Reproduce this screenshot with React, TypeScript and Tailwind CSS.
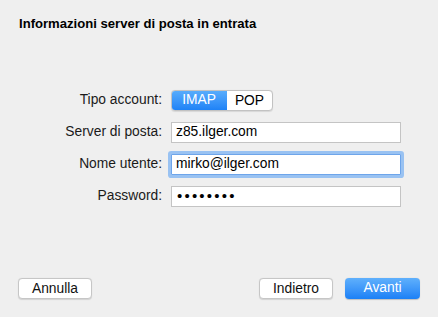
import { useState } from "react";

const FONT = "font-['Helvetica_Neue','Liberation_Sans',Arial,sans-serif]";

function FieldRow({ label, children }: { label: string; children: React.ReactNode }) {
  return (
    <div className="flex h-[21px] items-center">
      <div className="w-[163px] pr-[1px] text-right text-[13.8px] text-[#1a1a1a]">{label}</div>
      <div className="ml-[8px] flex h-full w-[230px] items-center">{children}</div>
    </div>
  );
}

function TextField({ value, focused, secret }: { value: string; focused?: boolean; secret?: boolean }) {
  const base = focused
    ? "flex h-full w-full items-center rounded-[1px] border border-[#6ea5ea] bg-white pl-[4px] text-black shadow-[0_0_0_3px_#99c2f2]"
    : "flex h-full w-full items-center border border-[#c4c4c4] bg-white pl-[4px] text-black";
  return (
    <div className={base}>
      {secret ? (
        <span className="pl-[1px] text-[15px] tracking-[2.2px]">{value}</span>
      ) : (
        <span className="text-[13.8px]">{value}</span>
      )}
    </div>
  );
}

function PushButton({ label, primary }: { label: string; primary?: boolean }) {
  return (
    <button
      className={
        primary
          ? "h-[21px] w-[75px] rounded-[4px] bg-gradient-to-b from-[#5fb0fc] to-[#1a80f6] text-[13.8px] text-white shadow-[0_0.5px_1px_rgba(0,0,0,0.2)]"
          : "h-[21px] w-[74px] rounded-[4px] border border-[#c6c6c6] bg-white text-[13.8px] text-[#111] shadow-[0_0.5px_1px_rgba(0,0,0,0.12)]"
      }
    >
      {label}
    </button>
  );
}

export default function App() {
  const [protocol, setProtocol] = useState<"IMAP" | "POP">("IMAP");

  return (
    <div className={`${FONT} flex h-[317px] w-[438px] flex-col bg-[#efefef]`}>
      <div className="pl-[19px] pt-[16px] text-[13.1px] font-bold leading-[16px] text-black">
        Informazioni server di posta in entrata
      </div>

      <div className="mt-[58px] flex flex-col gap-[11px]">
        <FieldRow label="Tipo account:">
          <div className="flex h-full w-[102px] overflow-hidden rounded-[4px] border border-[#c2c2c2] bg-white shadow-[0_0.5px_1px_rgba(0,0,0,0.1)]">
            {(["IMAP", "POP"] as const).map((option) => (
              <button
                key={option}
                onClick={() => setProtocol(option)}
                className={
                  protocol === option
                    ? "-my-px -ml-px w-[56px] rounded-l-[4px] bg-gradient-to-b from-[#5aaefc] to-[#1a80f6] text-[13.8px] text-white"
                    : "flex-1 text-[13.8px] text-black"
                }
              >
                {option}
              </button>
            ))}
          </div>
        </FieldRow>
        <FieldRow label="Server di posta:">
          <TextField value="z85.ilger.com" />
        </FieldRow>
        <FieldRow label="Nome utente:">
          <TextField value="mirko@ilger.com" focused />
        </FieldRow>
        <FieldRow label="Password:">
          <TextField value="••••••••" secret />
        </FieldRow>
      </div>

      <div className="mt-auto mb-[18px] flex items-center px-[18px]">
        <PushButton label="Annulla" />
        <div className="ml-auto flex gap-[12px]">
          <PushButton label="Indietro" />
          <PushButton label="Avanti" primary />
        </div>
      </div>
    </div>
  );
}
